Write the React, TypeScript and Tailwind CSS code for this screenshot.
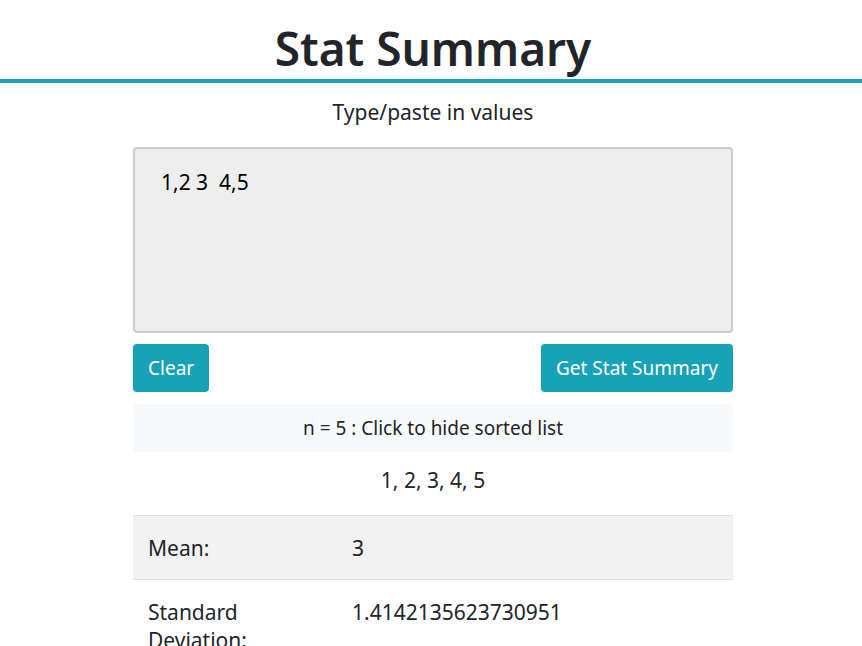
import { useState } from "react";

const FONT = { fontFamily: '"Segoe UI", "Noto Sans", "Open Sans", sans-serif' };

// ---------------------------------------------------------------------------
// Stat summary page
// ---------------------------------------------------------------------------

export default function App() {
  const [text, setText] = useState("1,2 3  4,5");
  const [showList, setShowList] = useState(true);

  const values = text
    .split(/[\s,]+/)
    .filter((v) => v !== "")
    .map(Number)
    .filter((v) => !isNaN(v))
    .sort((a, b) => a - b);

  return (
    <div className="min-h-screen bg-white text-[#212529]" style={FONT}>
      {/* Header */}
      <div className="border-b-4 border-[#17a2b8] pl-[4px] text-center">
        <h1 className="pt-[17px] text-[46px] font-semibold leading-[62px]">Stat Summary</h1>
      </div>

      <div className="pl-[4px]">
        <div className="mx-auto w-[600px]">
          <p className="mt-[14px] text-center text-[21px] leading-[30px]">Type/paste in values</p>

          {/* Input */}
          <textarea
            value={text}
            onChange={(e) => setText(e.target.value)}
            className="mt-[20px] block h-[186px] w-full resize-none rounded border-2 border-[#cccccc] bg-[#eeeeee] px-[26px] py-[18px] text-[21px] leading-[30px] text-black outline-none"
            style={FONT}
          />

          {/* Actions */}
          <div className="mt-[11px] flex justify-between">
            <button
              onClick={() => setText("")}
              className="h-[48px] rounded bg-[#17a2b8] px-[15px] text-[19px] text-white"
            >
              Clear
            </button>
            <button className="h-[48px] rounded bg-[#17a2b8] px-[15px] text-[19px] text-white">
              Get Stat Summary
            </button>
          </div>

          {/* Sorted list toggle */}
          <button
            onClick={() => setShowList(!showList)}
            className="mt-[12px] flex h-[48px] w-full items-center justify-center rounded bg-[#f8f9fa] text-[19px]"
          >
            n = {values.length} : Click to {showList ? "hide" : "show"} sorted list
          </button>
          {showList && (
            <p className="pb-[20px] pt-[13px] text-center text-[21px] leading-[30px]">{values.join(", ")}</p>
          )}

          {/* Results */}
          <table className="w-full border-collapse text-left text-[21px] leading-[28px]">
            <tbody>
              <tr className="border-y border-[#dee2e6] bg-[#f2f2f2]">
                <td className="h-[64px] w-[204px] px-[15px] align-middle">Mean:</td>
                <td className="px-[15px] align-middle">3</td>
              </tr>
              <tr className="border-b border-[#dee2e6]">
                <td className="w-[204px] px-[15px] py-[18px] align-top">Standard Deviation:</td>
                <td className="px-[15px] py-[18px] align-top">1.4142135623730951</td>
              </tr>
            </tbody>
          </table>
        </div>
      </div>
    </div>
  );
}
